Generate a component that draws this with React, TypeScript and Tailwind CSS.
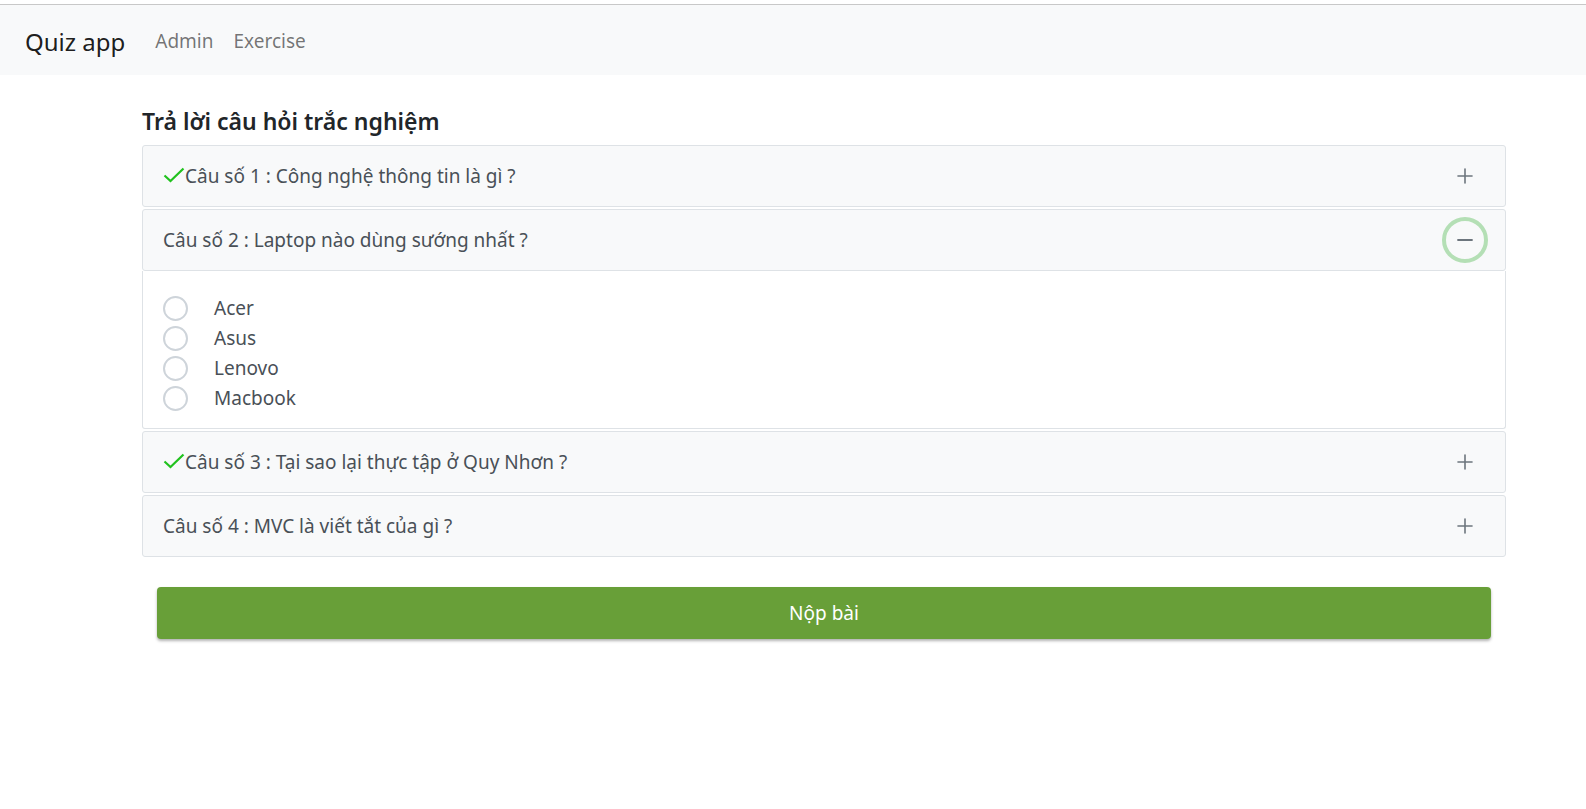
import { useState } from "react";
import { Plus, Minus } from "lucide-react";

const questions = [
  { id: 1, title: "Câu số 1 : Công nghệ thông tin là gì ?", answered: true, options: ["Phần mềm", "Phần cứng", "Mạng", "Tất cả"] },
  { id: 2, title: "Câu số 2 : Laptop nào dùng sướng nhất ?", answered: false, options: ["Acer", "Asus", "Lenovo", "Macbook"] },
  { id: 3, title: "Câu số 3 : Tại sao lại thực tập ở Quy Nhơn ?", answered: true, options: ["Gần nhà", "Biển đẹp", "Công ty tốt", "Khác"] },
  { id: 4, title: "Câu số 4 : MVC là viết tắt của gì ?", answered: false, options: ["Model View Controller", "Main View Code", "Khác", "Không biết"] },
];

function Check() {
  return (
    <svg width="22" height="16" viewBox="0 0 22 16" className="shrink-0 -mt-[3px]">
      <path d="M1.5 8.5 L7.5 14 L20.5 1.5" fill="none" stroke="#21c21e" strokeWidth="2.2" />
    </svg>
  );
}

export default function App() {
  const [open, setOpen] = useState<number | null>(2);

  return (
    <div className="min-h-screen bg-white text-[#212529]" style={{ fontFamily: '"Noto Sans", "Open Sans", sans-serif' }}>
      {/* viền trên */}
      <div className="h-[5px] bg-white border-b border-[#c8c8c8]" />

      {/* navbar */}
      <nav className="h-[70px] bg-[#f8f9fa] flex items-center px-[25px] pt-[3px]">
        <span className="text-[24px] text-black/90 mr-[30px]">Quiz app</span>
        <a className="text-[19px] text-black/55 mr-[20px]">Admin</a>
        <a className="text-[19px] text-black/55">Exercise</a>
      </nav>

      <main className="pl-[142px] pr-[80px] pt-[27px]">
        <h5 className="text-[23px] font-semibold leading-[38px] mb-[5px]">Trả lời câu hỏi trắc nghiệm</h5>

        <div className="flex flex-col gap-[2px]">
          {questions.map((q) => {
            const isOpen = open === q.id;
            return (
              <div key={q.id}>
                <button
                  onClick={() => setOpen(isOpen ? null : q.id)}
                  className="w-full h-[62px] flex items-center justify-between bg-[#f8f9fa] border border-[#dee2e6] rounded-[3px] pl-[20px] pr-[17px] text-left"
                >
                  <span className="flex items-center text-[19px] text-[#495057]">
                    {q.answered && <Check />}
                    {q.title}
                  </span>
                  {isOpen ? (
                    <span className="w-[46px] h-[46px] rounded-full border-[4px] border-[#b4dfb5] flex items-center justify-center">
                      <Minus size={24} strokeWidth={1.8} className="text-[#6c757d]" />
                    </span>
                  ) : (
                    <span className="w-[46px] h-[46px] flex items-center justify-center">
                      <Plus size={24} strokeWidth={1.6} className="text-[#6c757d]" />
                    </span>
                  )}
                </button>
                {isOpen && (
                  <div className="border border-t-0 border-[#dee2e6] rounded-b-[3px] pl-[20px] pt-[22px] pb-[15px] flex flex-col">
                    {q.options.map((o) => (
                      <label key={o} className="h-[30px] flex items-center">
                        <span className="w-[25px] h-[25px] rounded-full border-2 border-[#ced4da] bg-white shrink-0" />
                        <span className="ml-[26px] text-[19px] text-[#495057]">{o}</span>
                      </label>
                    ))}
                  </div>
                )}
              </div>
            );
          })}
        </div>

        <div className="px-[15px] pt-[30px]">
          <button className="w-full h-[52px] rounded-[4px] bg-[#689f38] text-white text-[19px] shadow-[0_2px_3px_rgba(0,0,0,0.3)]">
            Nộp bài
          </button>
        </div>
      </main>
    </div>
  );
}
